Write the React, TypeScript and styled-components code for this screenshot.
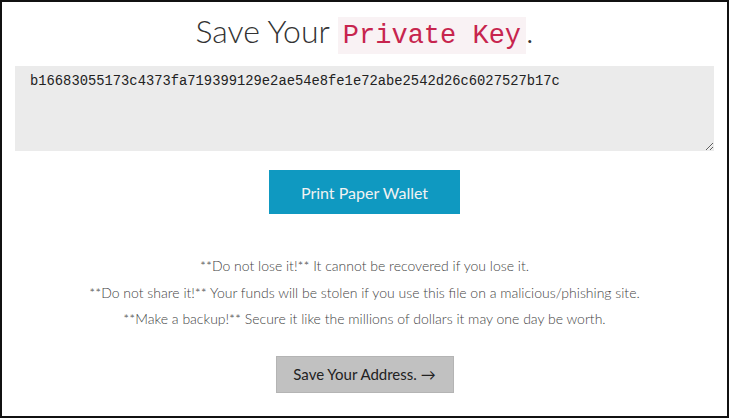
import React from 'react'
import styled, { createGlobalStyle } from 'styled-components'

const Global = createGlobalStyle`
  html, body {
    margin: 0;
    padding: 0;
    background: #fff;
  }
  body {
    font-family: Lato, "Open Sans", sans-serif;
  }
`

const Frame = styled.div`
  box-sizing: border-box;
  width: 729px;
  height: 418px;
  border: 2px solid #111;
  display: flex;
  flex-direction: column;
  align-items: center;
  padding: 0 13px;
`

const Title = styled.h1`
  margin: 10px 0 11px;
  font-family: Lato, sans-serif;
  font-weight: 300;
  font-size: 32px;
  line-height: 38px;
  color: #333;
`

const Code = styled.code`
  font-family: "Liberation Mono", "DejaVu Sans Mono", monospace;
  font-size: 27px;
  color: #c7254e;
  background: #f9f2f4;
  padding: 4px 5px 3px;
`

const KeyBox = styled.textarea`
  box-sizing: border-box;
  width: 100%;
  height: 85px;
  margin: 0;
  padding: 7px 15px;
  border: none;
  outline: none;
  background: #ebebeb;
  color: #222;
  font-family: "Liberation Mono", "DejaVu Sans Mono", monospace;
  font-size: 13.8px;
  line-height: 18px;
  resize: vertical;
`

const Button = styled.button<{ $tone: 'blue' | 'gray' }>`
  font-family: Lato, sans-serif;
  font-weight: 400;
  border: 1px solid ${p => (p.$tone === 'blue' ? '#0f99c1' : '#b4b4b4')};
  background: ${p => (p.$tone === 'blue' ? '#0f99c1' : '#c1c1c1')};
  color: ${p => (p.$tone === 'blue' ? '#f2f2f2' : '#222')};
  cursor: pointer;
`

const PrintButton = styled(Button)`
  margin-top: 19px;
  width: 191px;
  height: 44px;
  font-size: 16px;
`

const Notes = styled.div`
  margin-top: 39px;
  display: flex;
  flex-direction: column;
  align-items: center;
`

const Note = styled.p`
  margin: 0;
  font-family: Lato, sans-serif;
  font-weight: 300;
  font-size: 14px;
  line-height: 26.5px;
  color: #444;
`

const NextButton = styled(Button)`
  margin-top: 23px;
  width: 178px;
  height: 37px;
  font-size: 15px;
`

export default function App() {
  return (
    <>
      <Global />
      <Frame>
        <Title>
          Save Your <Code>Private Key</Code>.
        </Title>
        <KeyBox
          readOnly
          value="b16683055173c4373fa719399129e2ae54e8fe1e72abe2542d26c6027527b17c"
        />
        <PrintButton $tone="blue">Print Paper Wallet</PrintButton>
        <Notes>
          <Note>**Do not lose it!** It cannot be recovered if you lose it.</Note>
          <Note>**Do not share it!** Your funds will be stolen if you use this file on a malicious/phishing site.</Note>
          <Note>**Make a backup!** Secure it like the millions of dollars it may one day be worth.</Note>
        </Notes>
        <NextButton $tone="gray">Save Your Address. →</NextButton>
      </Frame>
    </>
  )
}
